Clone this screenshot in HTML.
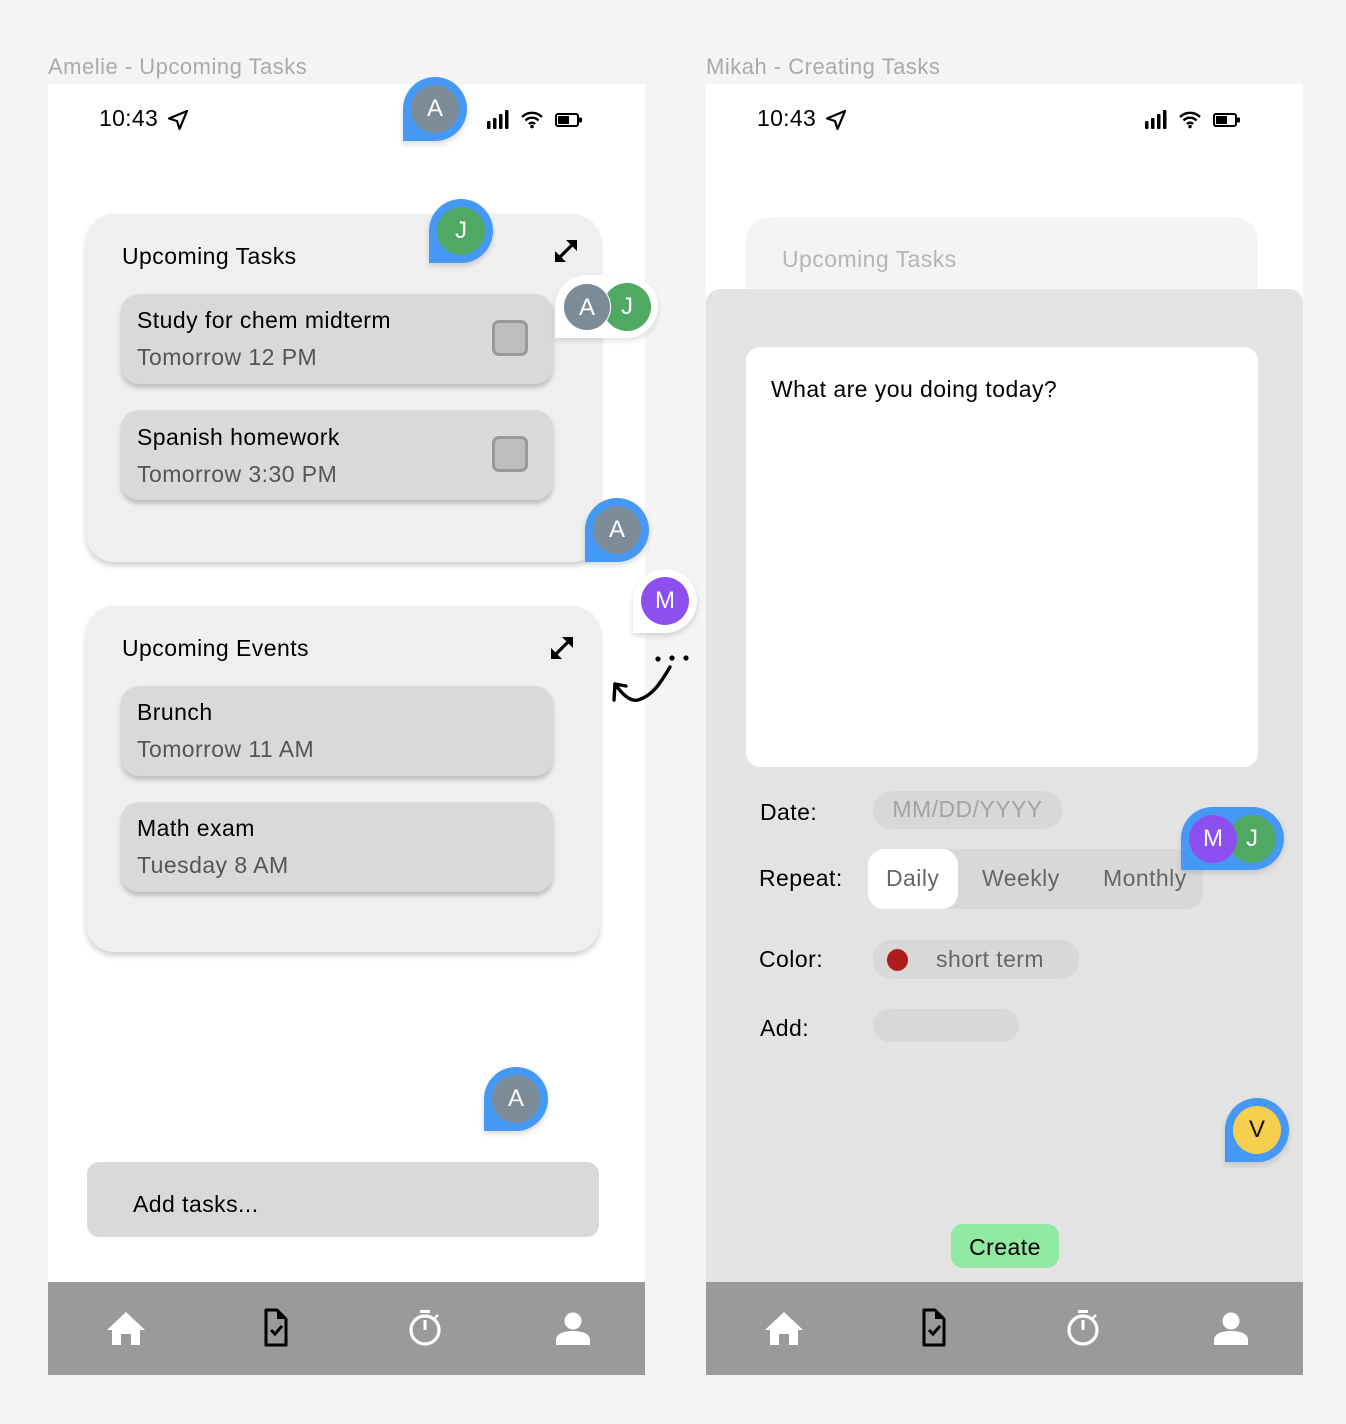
<!DOCTYPE html>
<html><head><meta charset="utf-8"><style>
*{margin:0;padding:0;box-sizing:border-box}
body{width:1346px;height:1424px;background:#f4f4f4;position:relative;overflow:hidden;font-family:"Liberation Sans",Arial,sans-serif}
.a{position:absolute}
.t{position:absolute;line-height:1;white-space:nowrap}
.lbl{font-size:22px;color:#aaa;letter-spacing:.5px}
.frame{background:#fff}
.card{background:#efefef;border-radius:28px;box-shadow:0 4px 6px rgba(0,0,0,.18)}
.item{background:#d9d9d9;border-radius:18px;box-shadow:0 4px 5px rgba(0,0,0,.2)}
.h{font-size:23px;color:#000;letter-spacing:.45px}
.s{font-size:23px;color:#555;letter-spacing:.45px}
.cb{position:absolute;width:36px;height:36px;border:3px solid #999;background:#bdbdbd;border-radius:7px}
.pin{position:absolute;width:64px;height:64px;border-radius:32px 32px 32px 0;background:#4599f5;box-shadow:0 3px 6px rgba(0,0,0,.15)}
.pin.w{background:#fff}
.av{position:absolute;width:48px;height:48px;border-radius:50%;color:#fff;font-size:24px;line-height:48px;text-align:center}
.nav{background:#9a9a9a}
.pill{position:absolute;background:#d8d8d8;border-radius:18px}
</style></head><body>

<div class="t lbl" style="left:48px;top:56px">Amelie - Upcoming Tasks</div>
<div class="t lbl" style="left:706px;top:56px">Mikah - Creating Tasks</div>

<!-- LEFT FRAME -->
<div class="a frame" style="left:48px;top:84px;width:597px;height:1291px"></div>
<div class="t" style="left:99px;top:107px;font-size:23px;letter-spacing:.3px">10:43</div>
<svg class="a" style="left:166px;top:108px" width="24" height="24" viewBox="0 0 24 24"><path d="M21 3 3 10.5l8 2.5 2.5 8z" fill="none" stroke="#000" stroke-width="2.2" stroke-linejoin="round"/></svg>
<svg class="a" style="left:486px;top:109px" width="100" height="22" viewBox="0 0 100 22">
<rect x="1" y="12" width="3.5" height="8" rx="1"/><rect x="7" y="9" width="3.5" height="11" rx="1"/><rect x="13" y="5" width="3.5" height="15" rx="1"/><rect x="19" y="1" width="3.5" height="19" rx="1"/>
<path d="M36 8a14 14 0 0 1 20 0M39.5 11.5a9 9 0 0 1 13 0M43 15a4 4 0 0 1 6 0" fill="none" stroke="#000" stroke-width="2.4"/><circle cx="46" cy="17.5" r="1.8"/>
<rect x="70" y="5" width="22" height="12" rx="2" fill="none" stroke="#000" stroke-width="2"/><rect x="72" y="7" width="11" height="8"/><rect x="93" y="8.5" width="3" height="5" rx="1"/>
</svg>

<!-- card 1 -->
<div class="a card" style="left:86px;top:214px;width:514px;height:348px"></div>
<div class="t h" style="left:122px;top:245px">Upcoming Tasks</div>
<svg class="a" style="left:552px;top:237px" width="28" height="28" viewBox="0 0 28 28"><path d="M6 22 22 6" stroke="#000" stroke-width="3.2"/><path d="M14 3h11v11zM14 25H3V14z" fill="#000"/></svg>
<div class="a item" style="left:121px;top:294px;width:432px;height:90px"></div>
<div class="t h" style="left:137px;top:309px">Study for chem midterm</div>
<div class="t s" style="left:137px;top:346px">Tomorrow 12 PM</div>
<div class="cb" style="left:492px;top:320px"></div>
<div class="a item" style="left:121px;top:410px;width:432px;height:90px"></div>
<div class="t h" style="left:137px;top:426px">Spanish homework</div>
<div class="t s" style="left:137px;top:463px">Tomorrow 3:30 PM</div>
<div class="cb" style="left:492px;top:436px"></div>

<!-- card 2 -->
<div class="a card" style="left:86px;top:606px;width:514px;height:346px"></div>
<div class="t h" style="left:122px;top:637px">Upcoming Events</div>
<svg class="a" style="left:548px;top:634px" width="28" height="28" viewBox="0 0 28 28"><path d="M6 22 22 6" stroke="#000" stroke-width="3.2"/><path d="M14 3h11v11zM14 25H3V14z" fill="#000"/></svg>
<div class="a item" style="left:121px;top:686px;width:432px;height:90px"></div>
<div class="t h" style="left:137px;top:701px">Brunch</div>
<div class="t s" style="left:137px;top:738px">Tomorrow 11 AM</div>
<div class="a item" style="left:121px;top:802px;width:432px;height:90px"></div>
<div class="t h" style="left:137px;top:817px">Math exam</div>
<div class="t s" style="left:137px;top:854px">Tuesday 8 AM</div>

<div class="a" style="left:87px;top:1162px;width:512px;height:75px;background:#d9d9d9;border-radius:12px"></div>
<div class="t h" style="left:133px;top:1193px">Add tasks...</div>

<!-- arrow doodle -->
<svg class="a" style="left:608px;top:650px" width="86" height="56" viewBox="0 0 86 56">
<circle cx="50" cy="9" r="2.6"/><circle cx="64" cy="8" r="2.6"/><circle cx="78" cy="8" r="2.6"/>
<path d="M62 17C52 34 44 46 30 50 22 52 14 44 7 34" fill="none" stroke="#000" stroke-width="3.4" stroke-linecap="round"/>
<path d="M7 34 6 50M7 34 18 36" fill="none" stroke="#000" stroke-width="3.4" stroke-linecap="round"/>
</svg>

<div class="a nav" style="left:48px;top:1282px;width:597px;height:93px"></div>

<!-- RIGHT FRAME -->
<div class="a frame" style="left:706px;top:84px;width:597px;height:1291px"></div>
<div class="t" style="left:757px;top:107px;font-size:23px;letter-spacing:.3px">10:43</div>
<svg class="a" style="left:824px;top:108px" width="24" height="24" viewBox="0 0 24 24"><path d="M21 3 3 10.5l8 2.5 2.5 8z" fill="none" stroke="#000" stroke-width="2.2" stroke-linejoin="round"/></svg>
<svg class="a" style="left:1144px;top:109px" width="100" height="22" viewBox="0 0 100 22">
<rect x="1" y="12" width="3.5" height="8" rx="1"/><rect x="7" y="9" width="3.5" height="11" rx="1"/><rect x="13" y="5" width="3.5" height="15" rx="1"/><rect x="19" y="1" width="3.5" height="19" rx="1"/>
<path d="M36 8a14 14 0 0 1 20 0M39.5 11.5a9 9 0 0 1 13 0M43 15a4 4 0 0 1 6 0" fill="none" stroke="#000" stroke-width="2.4"/><circle cx="46" cy="17.5" r="1.8"/>
<rect x="70" y="5" width="22" height="12" rx="2" fill="none" stroke="#000" stroke-width="2"/><rect x="72" y="7" width="11" height="8"/><rect x="93" y="8.5" width="3" height="5" rx="1"/>
</svg>
<div class="a" style="left:746px;top:217px;width:512px;height:100px;background:#f4f4f4;border-radius:24px"></div>
<div class="t" style="left:782px;top:248px;font-size:23px;letter-spacing:.45px;color:#b5b5b5">Upcoming Tasks</div>
<div class="a" style="left:706px;top:289px;width:597px;height:993px;background:#e3e3e3;border-radius:14px 14px 0 0"></div>
<div class="a" style="left:746px;top:347px;width:512px;height:420px;background:#fff;border-radius:14px"></div>
<div class="t h" style="left:771px;top:378px">What are you doing today?</div>

<div class="t h" style="left:760px;top:801px">Date:</div>
<div class="pill" style="left:873px;top:791px;width:189px;height:38px"></div>
<div class="t" style="left:873px;top:798px;width:189px;text-align:center;font-size:23px;letter-spacing:.45px;color:#a3a3a3">MM/DD/YYYY</div>

<div class="t h" style="left:759px;top:867px">Repeat:</div>
<div class="pill" style="left:868px;top:849px;width:335px;height:60px;border-radius:16px"></div>
<div class="a" style="left:868px;top:849px;width:90px;height:60px;background:#fff;border-radius:16px"></div>
<div class="t s" style="left:886px;top:867px;color:#666">Daily</div>
<div class="t s" style="left:982px;top:867px;color:#666">Weekly</div>
<div class="t s" style="left:1103px;top:867px;color:#666">Monthly</div>

<div class="t h" style="left:759px;top:948px">Color:</div>
<div class="pill" style="left:873px;top:940px;width:206px;height:39px"></div>
<div class="a" style="left:887px;top:949px;width:21px;height:22px;border-radius:50%;background:#b01c1c"></div>
<div class="t s" style="left:936px;top:948px;color:#666">short term</div>

<div class="t h" style="left:760px;top:1017px">Add:</div>
<div class="pill" style="left:873px;top:1009px;width:146px;height:33px"></div>

<div class="a" style="left:951px;top:1224px;width:108px;height:44px;background:#8fe9a0;border-radius:12px"></div>
<div class="t h" style="left:951px;top:1236px;width:108px;text-align:center">Create</div>

<div class="a nav" style="left:706px;top:1282px;width:597px;height:93px"></div>

<!-- nav icons -->
<svg class="a" style="left:48px;top:1282px" width="1255" height="93" viewBox="0 0 1255 93">
<g>
<path d="M78 30 59 48h5v15h9V52h10v11h9V48h5z" fill="#fff"/>
<path d="M218 28h11l9 9v26h-20z" fill="none" stroke="#000" stroke-width="3" stroke-linejoin="round"/><path d="M229 28v9h9" fill="#000"/><path d="M223 48l4 4 7-8" fill="none" stroke="#000" stroke-width="3"/>
<circle cx="377" cy="48" r="14" fill="none" stroke="#fff" stroke-width="3.2"/><rect x="372" y="28" width="10" height="3" fill="#fff"/><rect x="375.5" y="38" width="3" height="10" fill="#fff"/><path d="M387 36l3-3" stroke="#fff" stroke-width="2.5"/>
<circle cx="525" cy="39" r="8.5" fill="#fff"/><path d="M508 63v-5c0-6 7-9 17-9s17 3 17 9v5z" fill="#fff"/>
</g>
<g transform="translate(658 0)">
<path d="M78 30 59 48h5v15h9V52h10v11h9V48h5z" fill="#fff"/>
<path d="M218 28h11l9 9v26h-20z" fill="none" stroke="#000" stroke-width="3" stroke-linejoin="round"/><path d="M229 28v9h9" fill="#000"/><path d="M223 48l4 4 7-8" fill="none" stroke="#000" stroke-width="3"/>
<circle cx="377" cy="48" r="14" fill="none" stroke="#fff" stroke-width="3.2"/><rect x="372" y="28" width="10" height="3" fill="#fff"/><rect x="375.5" y="38" width="3" height="10" fill="#fff"/><path d="M387 36l3-3" stroke="#fff" stroke-width="2.5"/>
<circle cx="525" cy="39" r="8.5" fill="#fff"/><path d="M508 63v-5c0-6 7-9 17-9s17 3 17 9v5z" fill="#fff"/>
</g>
</svg>

<!-- cursors -->
<div class="pin" style="left:403px;top:77px"><div class="av" style="left:8px;top:8px;background:#7b8b98">A</div></div>
<div class="pin" style="left:429px;top:199px"><div class="av" style="left:8px;top:8px;background:#4fa963">J</div></div>
<div class="a" style="left:555px;top:275px;width:103px;height:63px;background:#fff;border-radius:32px 32px 32px 0;box-shadow:0 3px 6px rgba(0,0,0,.12)">
<div class="av" style="left:48px;top:8px;background:#4fa963">J</div>
<div class="av" style="left:8px;top:8px;background:#7b8b98;border:1px solid #fff">A</div></div>
<div class="pin" style="left:585px;top:498px"><div class="av" style="left:8px;top:8px;background:#7b8b98">A</div></div>
<div class="pin w" style="left:633px;top:569px"><div class="av" style="left:8px;top:8px;background:#8e4ff0">M</div></div>
<div class="pin" style="left:484px;top:1067px"><div class="av" style="left:8px;top:8px;background:#7b8b98">A</div></div>
<div class="a" style="left:1181px;top:807px;width:103px;height:63px;background:#4599f5;border-radius:32px 32px 32px 0;box-shadow:0 3px 6px rgba(0,0,0,.12)">
<div class="av" style="left:47px;top:8px;background:#4fa963">J</div>
<div class="av" style="left:8px;top:8px;background:#8e4ff0">M</div></div>
<div class="pin" style="left:1225px;top:1098px"><div class="av" style="left:8px;top:8px;background:#f6cf4e;color:#111">V</div></div>

</body></html>
